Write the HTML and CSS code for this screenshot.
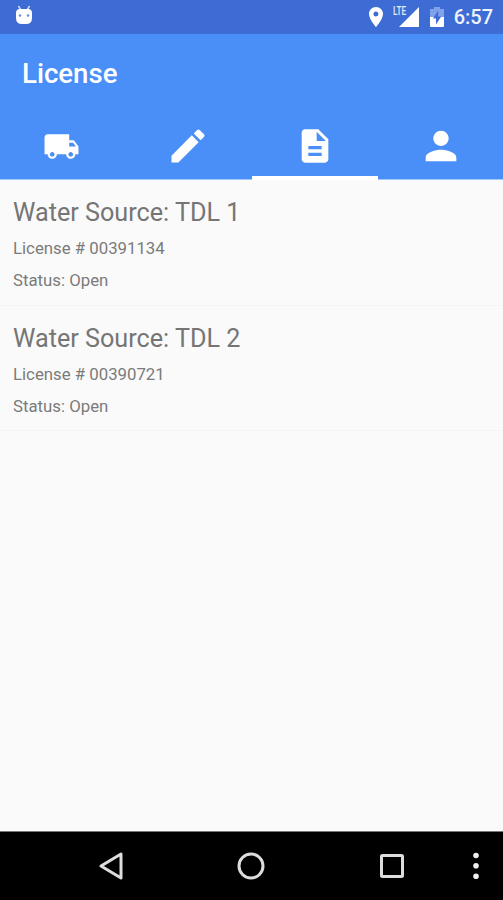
FILE: index.html
```html
<!DOCTYPE html>
<html lang="en">
<head>
<meta charset="utf-8">
<title>License</title>
<link rel="stylesheet" href="styles.css">
</head>
<body>
<div class="screen">
  <div class="status-bar">
    <svg class="bug" width="18" height="20" viewBox="0 0 18 20"><path d="M3.500 1l2 3.500M14.500 1l-2 3.500" stroke="#e4ebfb" stroke-width="1.500"/><path d="M1 8q0-4 4-4h8q4 0 4 4v5q0 6-6 6H7q-6 0-6-6z" fill="#fff"/><circle cx="5" cy="10.500" r="1.300" fill="#6c90df"/><circle cx="13" cy="10.500" r="1.300" fill="#6c90df"/></svg>
    <div class="status-icons">
      <svg class="pin" width="14" height="20" viewBox="5 2 14 20"><path fill="#fff" d="M12 2C8.130 2 5 5.130 5 9c0 5.250 7 13 7 13s7-7.750 7-13c0-3.870-3.130-7-7-7zm0 9.500a2.500 2.500 0 1 1 0-5 2.500 2.500 0 0 1 0 5z"/></svg>
      <div class="signal"><span class="lte">LTE</span><svg width="20" height="20" viewBox="0 0 20 20"><path fill="#fff" d="M20 0v20H0z"/></svg></div>
      <svg class="battery" width="14" height="21" viewBox="0 0 14 21"><path fill="#7fa2ea" d="M4 1h6v2h4v9H0V3h4z"/><path fill="#fff" d="M0 11h14v9q0 1-1 1H1q-1 0-1-1z"/><path fill="#3d6cd4" d="M8.200 4.500v6h3L6 18.500v-6H3z"/></svg>
      <span class="clock">6:57</span>
    </div>
  </div>
  <header class="toolbar"><h1>License</h1></header>
  <nav class="tabs">
    <div class="tab"><svg width="37" height="37" viewBox="0 0 24 24"><path d="M20 8h-3V4H3c-1.100 0-2 .9-2 2v11h2c0 1.660 1.340 3 3 3s3-1.340 3-3h6c0 1.660 1.340 3 3 3s3-1.340 3-3h2v-5l-3-4zM6 18.500c-.83 0-1.500-.67-1.500-1.500s.67-1.500 1.500-1.500 1.500.67 1.500 1.500-.67 1.500-1.500 1.500zm13.500-9l1.960 2.500H17V9.500h2.500zm-1.500 9c-.83 0-1.500-.67-1.500-1.500s.67-1.500 1.500-1.500 1.500.67 1.500 1.500-.67 1.500-1.500 1.500z"/></svg></div>
    <div class="tab"><svg width="44" height="44" viewBox="0 0 24 24"><path d="M3 17.250V21h3.750L17.810 9.940l-3.750-3.750L3 17.250zM20.710 7.040c.39-.39.39-1.020 0-1.410l-2.340-2.340c-.39-.39-1.020-.39-1.410 0l-1.830 1.830 3.750 3.750 1.830-1.830z"/></svg></div>
    <div class="tab active"><svg width="40" height="40" viewBox="0 0 24 24"><path d="M14 2H6c-1.100 0-1.990.9-1.990 2L4 20c0 1.100.89 2 1.990 2H18c1.100 0 2-.9 2-2V8l-6-6zm2 16H8v-2h8v2zm0-4H8v-2h8v2zm-3-5V3.500L18.500 9H13z"/></svg></div>
    <div class="tab"><svg width="46" height="46" viewBox="0 0 24 24"><path d="M12 12c2.210 0 4-1.790 4-4s-1.790-4-4-4-4 1.790-4 4 1.790 4 4 4zm0 2c-2.670 0-8 1.340-8 4v2h16v-2c0-2.660-5.330-4-8-4z"/></svg></div>
  </nav>
  <main class="list">
    <section class="item"><h2>Water Source: TDL 1</h2><p>License # 00391134</p><p>Status: Open</p></section>
    <section class="item"><h2>Water Source: TDL 2</h2><p>License # 00390721</p><p>Status: Open</p></section>
  </main>
  <footer class="nav-bar">
    <svg class="back" width="24" height="28" viewBox="0 0 24 28"><path d="M22 2v24L2 14z"/></svg>
    <svg class="home" width="28" height="28" viewBox="0 0 28 28"><circle cx="14" cy="14" r="12"/></svg>
    <svg class="recent" width="24" height="26" viewBox="0 0 24 26"><rect x="1.500" y="2.500" width="21" height="21" rx="1"/></svg>
    <svg class="more" width="6" height="28" viewBox="0 0 6 28"><circle cx="3" cy="3.500" r="2.800"/><circle cx="3" cy="13.800" r="2.800"/><circle cx="3" cy="24.200" r="2.800"/></svg>
  </footer>
</div>
</body>
</html>
```
FILE: styles.css
```css
* { box-sizing: border-box; }
body { margin: 0; font-family: Roboto, sans-serif; }
h1, h2, p { margin: 0; font-weight: 400; }
svg { display: block; flex: none; }
.screen { display: flex; flex-direction: column; width: 503px; height: 900px; overflow: hidden; background: #fafafa; }
.status-bar { display: flex; justify-content: space-between; height: 34px; padding: 5px 10px 0 15px; background: #3d6cd4; }
.status-icons { display: flex; align-items: flex-start; }
.pin { margin: 2px 10px 0 0; }
.signal { display: flex; align-items: flex-start; margin-right: 11px; }
.signal svg { margin: 2px 0 0 -9px; }
.lte { width: 15px; font-size: 12px; line-height: 12px; font-weight: 500; color: #e6edfc; transform: scaleX(.68); transform-origin: left; }
.battery { margin: 1px 9.500px 0 0; }
.clock { font-size: 20px; line-height: 24px; font-weight: 500; color: #eef3fd; }
.toolbar { height: 80px; padding: 22px 22px 0; background: #4a8ff7; color: #fff; }
.toolbar h1 { font-size: 27.600px; line-height: 36px; font-weight: 500; }
.tabs { display: flex; flex: none; width: 506px; height: 66px; margin-left: -1.500px; background: #4a8ff7; border-bottom: 1px solid #a5c8fa; }
.tab { display: flex; flex: 1; height: 66px; align-items: center; justify-content: center; padding-bottom: 2px; fill: #fff; }
.tab.active { padding-top: 2px; border-bottom: 4px solid #fff; padding-bottom: 0; }
.list { flex: 1; }
.item { height: 126px; padding: 15px 13px 0; border-bottom: 1px solid #f5f5f5; color: #7b7b7b; }
.item + .item { height: 125px; }
.item h2 { font-size: 25.200px; line-height: 36px; color: #757575; }
.item p { font-size: 16.800px; line-height: 31.500px; }
.item h2 + p { margin-top: 2px; }
.nav-bar { display: flex; align-items: center; height: 69px; background: #000; border-top: 1px solid #777; fill: none; stroke: #ddd; stroke-width: 3; stroke-linejoin: round; }
.back { margin-left: 99px; }
.home { margin-left: 114px; }
.recent { margin-left: 115px; }
.more { margin-left: 69px; fill: #eee; stroke: none; }
```
